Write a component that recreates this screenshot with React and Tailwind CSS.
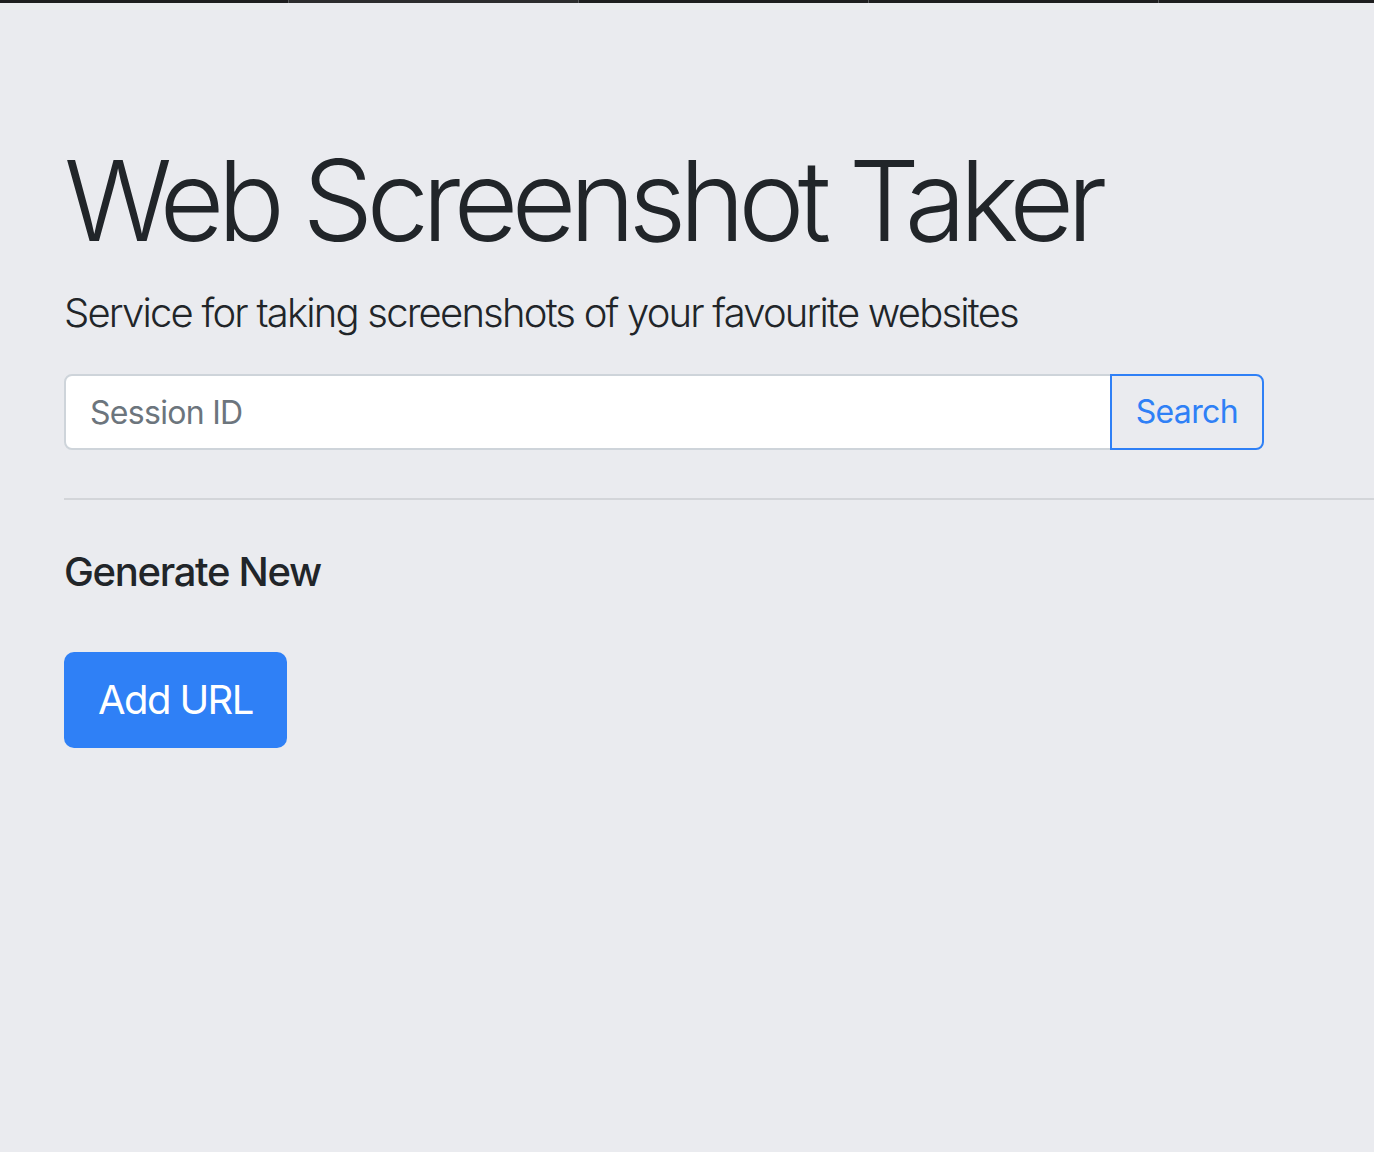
import React from 'react';

export default function App() {
  return (
    <div className="w-[1374px] h-[1152px] bg-[#eaebef] font-['Inter','Liberation_Sans',sans-serif] text-[#212529] overflow-hidden">
      {/* top strip */}
      <div className="flex h-[3px] bg-[#1d1d1f]">
        <div className="w-[289px] border-r border-[#55565a]" />
        <div className="w-[290px] border-r border-[#55565a] bg-[#2c2c2e]" />
        <div className="w-[290px] border-r border-[#55565a]" />
        <div className="w-[290px] border-r border-[#55565a]" />
        <div className="flex-1" />
      </div>

      <div className="pl-[64px] pt-[130px]">
        <h1 className="text-[112px] leading-[1.2] font-light tracking-[-0.062em] mb-[16px]">Web Screenshot Taker</h1>
        <p className="text-[40px] leading-[1.5] font-light tracking-[-0.045em]">
          Service for taking screenshots of your favourite websites
        </p>

        <form className="flex w-[1200px] mt-[31px]">
          <input
            type="text"
            placeholder="Session ID"
            className="flex-1 h-[76px] px-[24px] bg-white border-2 border-[#ced4da] rounded-l-[8px] text-[32px] tracking-[-0.022em] placeholder:text-[#6c757d] outline-none"
          />
          <button
            type="button"
            className="h-[76px] px-[24px] border-2 border-[#2f80f6] rounded-r-[8px] text-[32px] tracking-[-0.02em] text-[#2f80f6] -ml-[2px]"
          >
            Search
          </button>
        </form>

        <hr className="mt-[48px] border-t-2 border-[#d3d5d9]" />

        <h5 className="mt-[48px] text-[40px] leading-[1.2] font-medium tracking-[-0.033em]">Generate New</h5>

        <button
          type="button"
          className="mt-[56px] h-[96px] px-[32px] border-2 border-transparent bg-[#2f80f6] text-white text-[40px] tracking-[-0.04em] rounded-[10px]"
        >
          Add URL
        </button>
      </div>
    </div>
  );
}
